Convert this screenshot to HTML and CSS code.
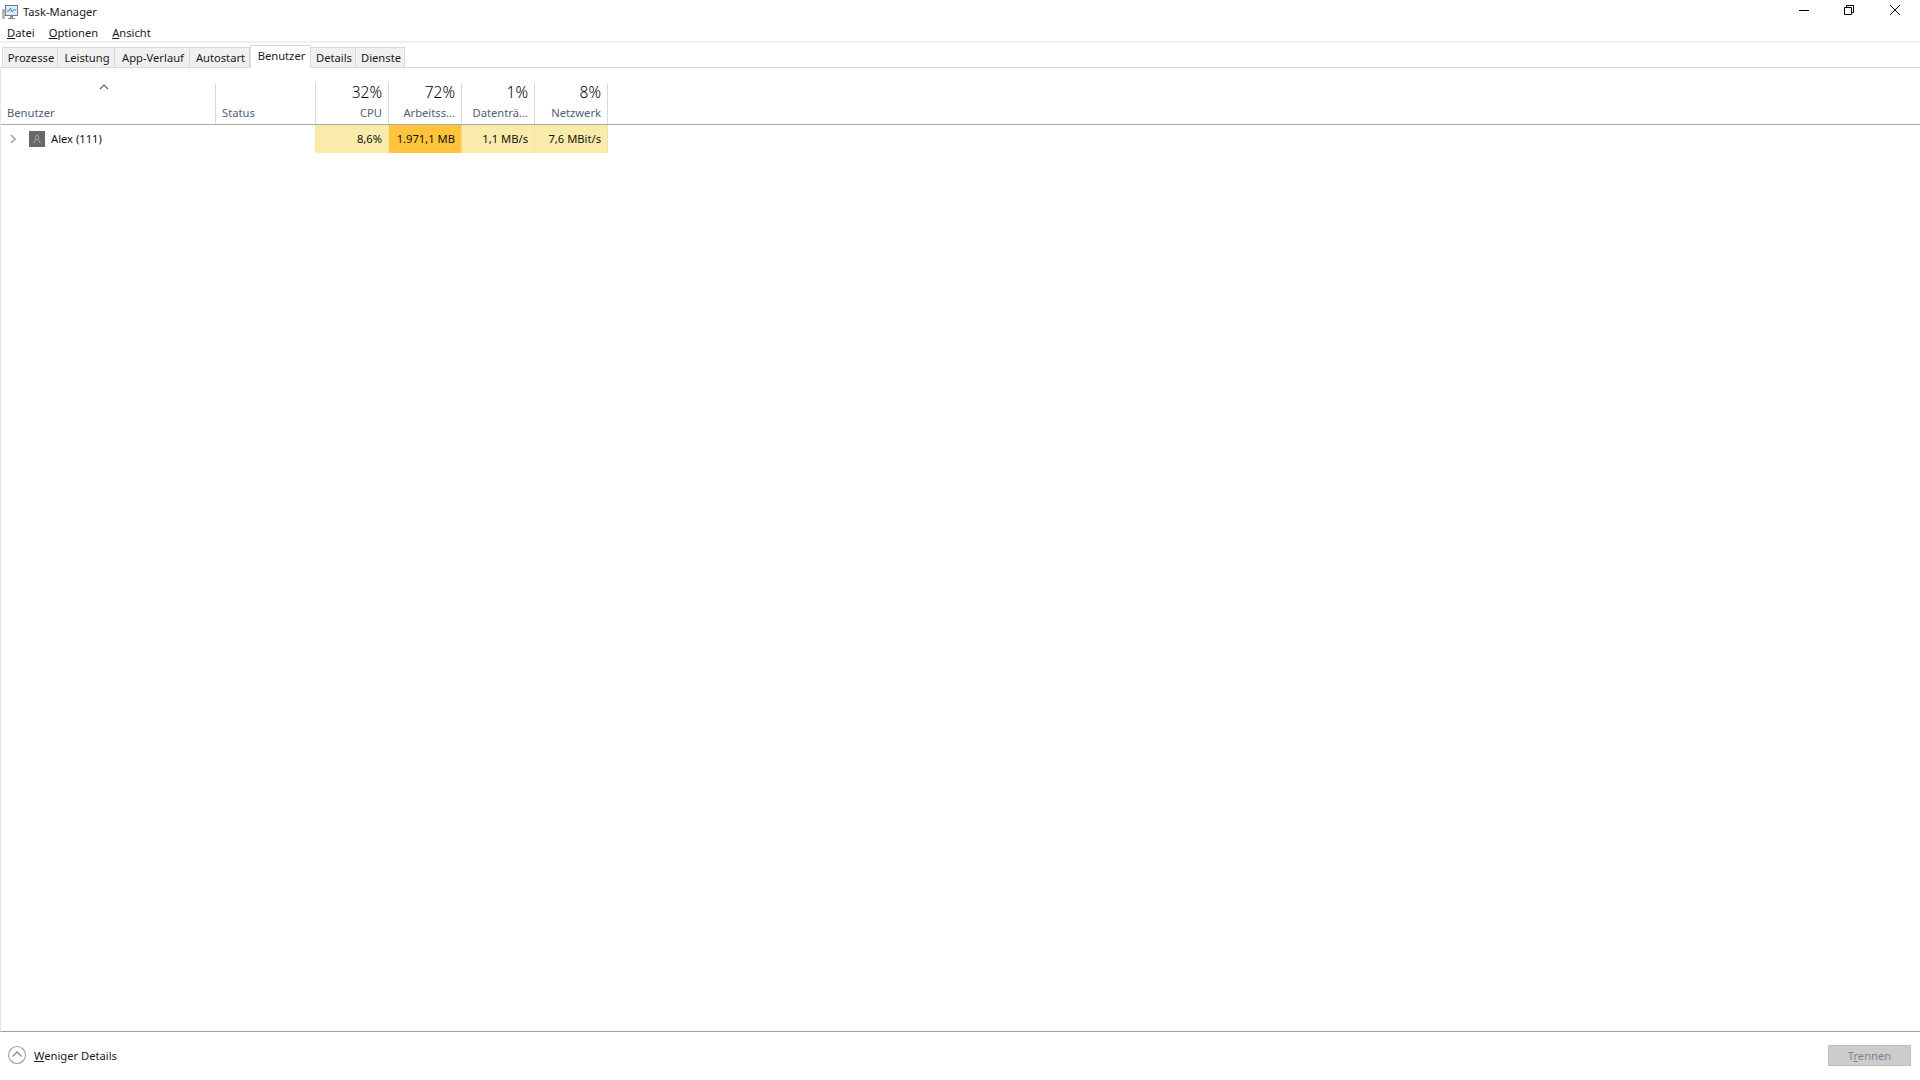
FILE: index.html
```html
<!DOCTYPE html>
<html>
  <head>
    <meta charset="utf-8">
    <title>Task-Manager</title>
    <link rel="stylesheet" href="styles.css">
  </head>
  <body>
    <div class="titlebar">
      <div class="title">
        <svg class="app-icon" width="16" height="16" viewBox="0 0 16 16">
          <rect x="0" y="5" width="3" height="10" fill="#b9bdb8"/>
          <rect x="1" y="7" width="1" height="1" fill="#5f8f5f"/>
          <rect x="3.5" y="1.5" width="12" height="10" fill="#dcebf8" stroke="#6f7f8f"/>
          <path d="M5 7 L7 7 L8.5 4 L10 8 L11.5 6 L14 6" fill="none" stroke="#3d8fd0"/>
          <rect x="8" y="12" width="3" height="2" fill="#8a929a"/>
          <rect x="6" y="14" width="7" height="1" fill="#8a929a"/>
        </svg>
        <span>Task-Manager</span>
      </div>
      <div class="window-buttons">
        <svg width="46" height="20" viewBox="0 0 46 20"><path d="M17 10.500 H27" stroke="#000" fill="none"/></svg>
        <svg width="46" height="20" viewBox="0 0 46 20"><path d="M16.500 7.500 H23.500 V14.500 H16.500 Z M18.500 7 V5.500 H25.500 V12.500 H24" stroke="#000" fill="none"/></svg>
        <svg width="46" height="20" viewBox="0 0 46 20"><path d="M16 5 L26 15 M26 5 L16 15" stroke="#000" fill="none"/></svg>
      </div>
    </div>

    <div class="menubar">
      <span><u>D</u>atei</span>
      <span><u>O</u>ptionen</span>
      <span><u>A</u>nsicht</span>
    </div>

    <div class="tabs">
      <div class="tab">Prozesse</div>
      <div class="tab">Leistung</div>
      <div class="tab">App-Verlauf</div>
      <div class="tab">Autostart</div>
      <div class="tab active">Benutzer</div>
      <div class="tab">Details</div>
      <div class="tab">Dienste</div>
    </div>

    <div class="content">
      <div class="table-head">
        <div class="col-user head-cell">
          <svg class="sort" width="10" height="6" viewBox="0 0 10 6"><path d="M1 5 L5 1 L9 5" fill="none" stroke="#5b6470" stroke-width="1.2"/></svg>
          <span class="label">Benutzer</span>
        </div>
        <div class="col-status head-cell"><span class="label">Status</span></div>
        <div class="col-num head-cell"><span class="pct">32%</span><span class="label">CPU</span></div>
        <div class="col-num head-cell"><span class="pct">72%</span><span class="label">Arbeitss...</span></div>
        <div class="col-num head-cell"><span class="pct">1%</span><span class="label">Datenträ...</span></div>
        <div class="col-num head-cell"><span class="pct">8%</span><span class="label">Netzwerk</span></div>
      </div>
      <div class="table-row">
        <div class="col-user user-cell">
          <svg class="expand" width="6" height="10" viewBox="0 0 6 10"><path d="M1 1 L5 5 L1 9" fill="none" stroke="#a6a6a6" stroke-width="1.600"/></svg>
          <svg class="avatar" width="16" height="16" viewBox="0 0 16 16">
            <rect width="16" height="16" fill="#696969"/>
            <path d="M6.500 6.500 C6.500 3.500 9.500 3.500 9.500 6.500 C9.500 7.500 9 8.500 8 8.500 C7 8.500 6.500 7.500 6.500 6.500 Z M5 12 C5 10 6 9.500 7 8.500 M11 12 C11 10 10 9.500 9 8.500" fill="none" stroke="#b5b5b5"/>
          </svg>
          <span>Alex (111)</span>
        </div>
        <div class="col-status"></div>
        <div class="col-num val light">8,6%</div>
        <div class="col-num val strong">1.971,1 MB</div>
        <div class="col-num val light">1,1 MB/s</div>
        <div class="col-num val light">7,6 MBit/s</div>
      </div>
    </div>

    <div class="footer">
      <div class="less">
        <svg width="20" height="20" viewBox="0 0 20 20">
          <circle cx="10" cy="10" r="8.500" fill="none" stroke="#a0a0a0" stroke-width="1.100"/>
          <path d="M5.500 11.500 L10 7 L14.500 11.500" fill="none" stroke="#8a8a8a" stroke-width="1.300"/>
        </svg>
        <span><u>W</u>eniger Details</span>
      </div>
      <button class="disconnect" disabled>T<u>r</u>ennen</button>
    </div>
  </body>
</html>
```

FILE: styles.css
```css
html, body {
  margin: 0;
  height: 100%;
}

body {
  display: flex;
  flex-direction: column;
  width: 1920px;
  height: 1080px;
  overflow: hidden;
  background: #fff;
  color: #000;
  font-family: "Noto Sans", "Open Sans", sans-serif;
  font-size: 11.2px;
}

.titlebar {
  display: flex;
  justify-content: space-between;
  height: 22px;
}

.title {
  display: flex;
  align-items: center;
  gap: 5px;
  padding: 1px 0 0 2px;
  color: #1a1a1a;
}

.window-buttons {
  display: flex;
}

.window-buttons svg {
  display: block;
}

.menubar {
  display: flex;
  gap: 14px;
  align-items: center;
  padding: 2px 0 0 7px;
  box-sizing: border-box;
  height: 21px;
  border-bottom: 2px solid #f0f0f0;
  color: #1a1a1a;
}

.tabs {
  display: grid;
  grid-template-columns: 56px 57px 75px 60px 61px 45px 49px;
  height: 22px;
  padding: 2px 0 0 2px;
  border-bottom: 1px solid #d9d9d9;
  align-items: end;
}

.tab {
  height: 20px;
  line-height: 19px;
  padding-left: 2px;
  box-sizing: border-box;
  text-align: center;
  background: #f0f0f0;
  border: 1px solid #d9d9d9;
  border-left-width: 0;
  border-bottom: 0;
  color: #1a1a1a;
}

.tab:first-child {
  border-left-width: 1px;
}

.tab.active {
  height: 23px;
  line-height: 20px;
  margin-bottom: -1px;
  background: #fff;
  border-left-width: 1px;
  position: relative;
}

.content {
  flex: 1;
  padding-top: 15px;
  border-left: 1px solid #e6e6e6;
  border-bottom: 1px solid #a0a0a0;
}

.table-head,
.table-row {
  display: grid;
  grid-template-columns: 215px 100px 73px 73px 73px 73px;
}

.table-head {
  height: 41px;
  border-bottom: 1px solid #a9a9a9;
}

.table-row {
  height: 28px;
}

.head-cell {
  position: relative;
  display: flex;
  flex-direction: column;
  justify-content: flex-end;
  padding: 0 6px 3px;
  border-right: 1px solid #d9d9d9;
}

.col-num.head-cell {
  align-items: flex-end;
}

.label {
  color: #4c607a;
  line-height: 16px;
}

.pct {
  font-size: 15.5px;
  font-weight: 300;
  line-height: 18px;
  color: #000;
  margin-bottom: 4px;
}

.sort {
  position: absolute;
  top: 1px;
  left: 98px;
}

.user-cell {
  display: flex;
  align-items: center;
  padding: 0 0 1px 9px;
  color: #10102a;
}

.avatar {
  margin: 0 6px 0 13px;
}

.val {
  display: flex;
  align-items: center;
  justify-content: flex-end;
  padding: 0 6px 1px 0;
  border-right: 1px solid #f0e3a8;
  color: #111;
}

.col-status + .val {
  margin-left: -1px;
}

.light {
  background: #f9ecaa;
}

.strong {
  background: #ffc33c;
  border-right-color: #ffd67a;
}

.footer {
  display: flex;
  justify-content: space-between;
  align-items: center;
  height: 46px;
  padding: 0 9px 2px 7px;
}

.less {
  display: flex;
  align-items: center;
  gap: 7px;
  color: #1a1a1a;
}

.disconnect {
  width: 83px;
  height: 21px;
  padding: 0;
  background: #cccccc;
  border: 1px solid #bfbfbf;
  color: #7d8299;
  font-family: inherit;
  font-size: 11.2px;
}
```
